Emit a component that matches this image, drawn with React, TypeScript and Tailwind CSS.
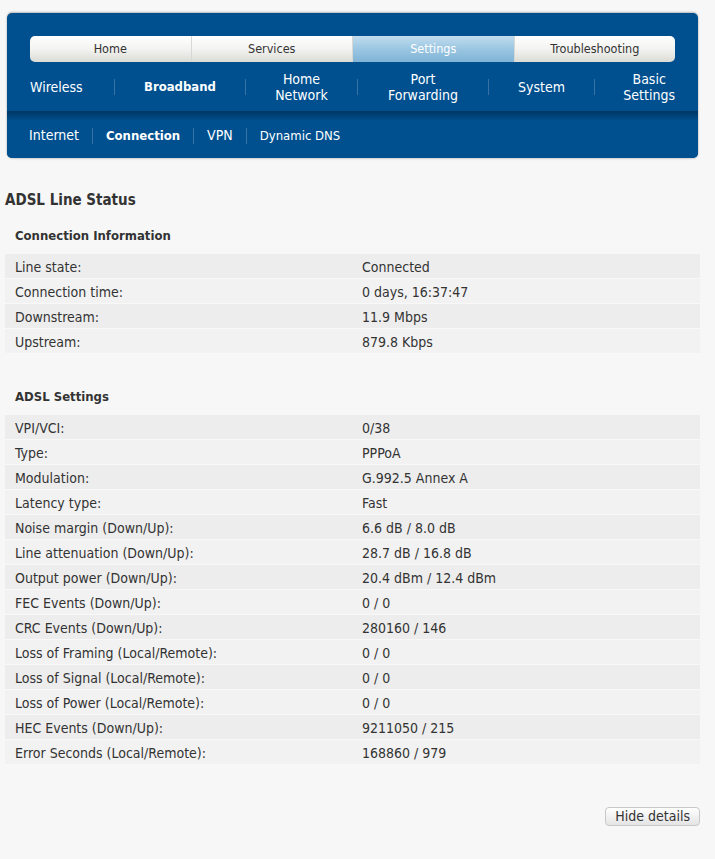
import React from "react";

const font = "font-['DejaVu_Sans_Condensed','DejaVu_Sans',Tahoma,sans-serif]";

const tabs = ["Home", "Services", "Settings", "Troubleshooting"];

const menu: { label: string[]; w: string; align: string; bold?: boolean }[] = [
  { label: ["Wireless"], w: "w-[84px]", align: "justify-start" },
  { label: ["Broadband"], w: "w-[131px]", align: "justify-center", bold: true },
  { label: ["Home", "Network"], w: "w-[112px]", align: "justify-center" },
  { label: ["Port", "Forwarding"], w: "w-[131px]", align: "justify-center" },
  { label: ["System"], w: "w-[106px]", align: "justify-center" },
  { label: ["Basic", "Settings"], w: "flex-1", align: "justify-end" },
];

const subMenu = [
  { label: "Internet" },
  { label: "Connection", bold: true },
  { label: "VPN" },
  { label: "Dynamic DNS" },
];

const connection = [
  ["Line state:", "Connected"],
  ["Connection time:", "0 days, 16:37:47"],
  ["Downstream:", "11.9 Mbps"],
  ["Upstream:", "879.8 Kbps"],
];

const adsl = [
  ["VPI/VCI:", "0/38"],
  ["Type:", "PPPoA"],
  ["Modulation:", "G.992.5 Annex A"],
  ["Latency type:", "Fast"],
  ["Noise margin (Down/Up):", "6.6 dB / 8.0 dB"],
  ["Line attenuation (Down/Up):", "28.7 dB / 16.8 dB"],
  ["Output power (Down/Up):", "20.4 dBm / 12.4 dBm"],
  ["FEC Events (Down/Up):", "0 / 0"],
  ["CRC Events (Down/Up):", "280160 / 146"],
  ["Loss of Framing (Local/Remote):", "0 / 0"],
  ["Loss of Signal (Local/Remote):", "0 / 0"],
  ["Loss of Power (Local/Remote):", "0 / 0"],
  ["HEC Events (Down/Up):", "9211050 / 215"],
  ["Error Seconds (Local/Remote):", "168860 / 979"],
];

function StatusTable({ rows }: { rows: string[][] }) {
  return (
    <div className="ml-[5px] mr-[15px] flex flex-col">
      {rows.map(([label, value], i) => (
        <div
          key={label}
          className={`flex h-[25px] items-center border-b border-[#f8f8f8] pt-px text-[14px] leading-[16px] text-[#333] ${
            i % 2 === 0 ? "bg-[#ededed]" : "bg-[#f2f2f2]"
          }`}
        >
          <div className="w-[357px] pl-[10px]">{label}</div>
          <div>{value}</div>
        </div>
      ))}
    </div>
  );
}

export default function App() {
  return (
    <div className={`min-h-[859px] w-full bg-[#f7f7f7] pt-[13px] ${font}`}>
      {/* Navigation panel */}
      <div className="mx-[7px] w-[691px] overflow-hidden rounded-[5px] bg-[#00508f] shadow-[0_-1px_2px_rgba(0,0,0,0.25),0_1px_2px_rgba(0,0,0,0.15)]">
        <div className="px-[23px] pt-[23px]">
          {/* Main tabs */}
          <div className="flex h-[26px] overflow-hidden rounded-[5px]">
            {tabs.map((t, i) => (
              <div
                key={t}
                className={`flex flex-1 items-center justify-center pt-px text-[12.5px] ${
                  t === "Settings"
                    ? "bg-gradient-to-b from-[#c0ddee] via-[#9bc6e2] to-[#80b4d6] text-white"
                    : "bg-gradient-to-b from-[#ffffff] via-[#f3f3f1] to-[#dcdcd6] text-[#333]"
                } ${i > 0 ? "border-l border-[#d8d8d4]" : ""}`}
              >
                {t}
              </div>
            ))}
          </div>

          {/* Section menu */}
          <div className="flex h-[49px] items-center text-[14px] leading-[16px] text-white">
            {menu.map((m, i) => (
              <div key={m.label.join(" ")} className={`flex items-center ${m.w}`}>
                {i > 0 && <span className="h-[16px] w-px bg-[#3873a6]" />}
                <div className={`flex flex-1 ${m.align}`}>
                  <div className={`text-center ${m.bold ? "text-[13px] font-bold" : ""}`}>
                    {m.label.map((l) => (
                      <div key={l}>{l}</div>
                    ))}
                  </div>
                </div>
              </div>
            ))}
          </div>
        </div>

        {/* Sub menu */}
        <div className="flex h-[47px] items-center bg-gradient-to-b from-[#003663] via-[#00508f] via-[10px] to-[#00508f] pt-[2px] pl-[22px] text-[14px] text-white">
          {subMenu.map((s, i) => (
            <div key={s.label} className="flex items-center">
              {i > 0 && <span className="mx-[13px] h-[16px] w-px bg-[#3873a6]" />}
              <span className={s.bold ? "text-[13px] font-bold" : s.label === "Dynamic DNS" ? "text-[13px]" : ""}>
                {s.label}
              </span>
            </div>
          ))}
        </div>
      </div>

      {/* Status */}
      <h1 className="mt-[33px] pl-[5px] text-[15px] leading-[18px] font-bold text-[#333]">ADSL Line Status</h1>
      <h2 className="mt-[19px] mb-[10px] pl-[15px] text-[13px] leading-[16px] font-bold text-[#333]">
        Connection Information
      </h2>
      <StatusTable rows={connection} />

      <h2 className="mt-[35px] mb-[10px] pl-[15px] text-[13px] leading-[16px] font-bold text-[#333]">
        ADSL Settings
      </h2>
      <StatusTable rows={adsl} />

      <div className="mt-[42px] flex justify-end pr-[15px]">
        <button className="h-[19px] rounded-[4px] border border-[#c8c8c8] bg-gradient-to-b from-[#ffffff] to-[#e4e4e4] px-[9px] text-[14px] leading-[17px] text-[#333]">
          Hide details
        </button>
      </div>
    </div>
  );
}
